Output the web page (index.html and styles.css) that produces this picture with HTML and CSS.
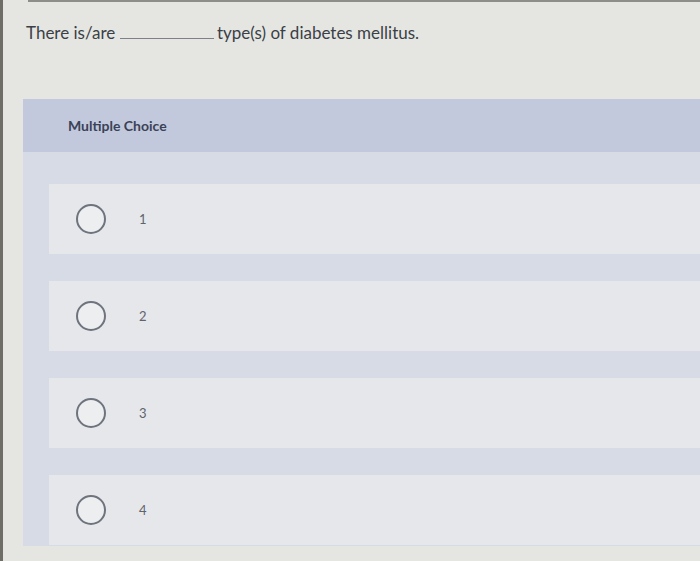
FILE: index.html
```html
<!DOCTYPE html>
<html lang="en">

<head>
    <meta charset="utf-8">
    <meta name="viewport" content="width=device-width, initial-scale=1.0">
    <title>Multiple Choice</title>
    <link rel="stylesheet" href="styles.css">
</head>

<body>

    <div class="topline"></div>

    <p class="question">There is/are <span class="blank"></span> type(s) of diabetes mellitus.</p>

    <section class="panel">
        <h2 class="panelHeader">Multiple Choice</h2>

        <div class="options">
            <label class="option"><span class="radio"></span><span class="nummer">1</span></label>
            <label class="option"><span class="radio"></span><span class="nummer">2</span></label>
            <label class="option"><span class="radio"></span><span class="nummer">3</span></label>
            <label class="option"><span class="radio"></span><span class="nummer">4</span></label>
        </div>
    </section>

</body>

</html>
```

FILE: styles.css
```css
body {
    margin: 0;
    height: 561px;
    background-color: #e5e6e2;
    border-left: 3px solid #6e6d66;
    font-family: 'Lato', 'Open Sans', sans-serif;
    overflow: hidden;
}

.topline {
    height: 2px;
    margin-left: 25px;
    background-color: #8d8e8c;
}

.question {
    margin: 0;
    padding: 20px 0 0 23px;
    height: 77px;
    font-size: 17px;
    line-height: 22px;
    color: #3b3f47;
}

.blank {
    display: inline-block;
    width: 94px;
    border-bottom: 1px solid #7d8088;
    margin: 0 -1px 0 0;
}

.panel {
    margin-left: 20px;
    background-color: #d6dbe5;
    padding-bottom: 1px;
}

.panelHeader {
    margin: 0;
    height: 53px;
    line-height: 53px;
    padding-left: 45px;
    background-color: #c3c9dc;
    font-size: 14px;
    font-weight: bold;
    color: #3a4258;
}

.options {
    display: flex;
    flex-direction: column;
    gap: 27px;
    padding: 32px 0 0 26px;
}

.option {
    display: flex;
    align-items: center;
    height: 70px;
    background-color: #e5e7eb;
}

.radio {
    width: 26px;
    height: 26px;
    border: 2px solid #6e737e;
    border-radius: 50%;
    margin-left: 27px;
    background-color: #eceef0;
}

.nummer {
    margin-left: 33px;
    font-size: 13px;
    color: #5f636c;
}
```
